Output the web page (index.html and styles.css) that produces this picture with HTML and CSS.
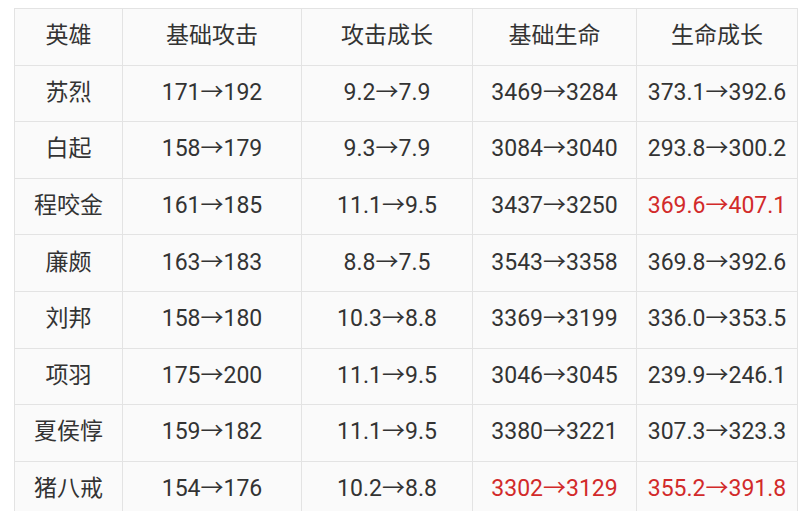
FILE: index.html
```html
<!DOCTYPE html>
<html lang="zh">
<head>
<meta charset="utf-8">
<link rel="stylesheet" href="styles.css">
</head>
<body>
<table class="stats">
  <colgroup>
    <col class="c1"><col class="c2"><col class="c3"><col class="c4"><col class="c5">
  </colgroup>
  <thead>
    <tr><th>英雄</th><th>基础攻击</th><th>攻击成长</th><th>基础生命</th><th>生命成长</th></tr>
  </thead>
  <tbody>
    <tr><td>苏烈</td><td>171→192</td><td>9.2→7.9</td><td>3469→3284</td><td>373.1→392.6</td></tr>
    <tr><td>白起</td><td>158→179</td><td>9.3→7.9</td><td>3084→3040</td><td>293.8→300.2</td></tr>
    <tr><td>程咬金</td><td>161→185</td><td>11.1→9.5</td><td>3437→3250</td><td class="up">369.6→407.1</td></tr>
    <tr><td>廉颇</td><td>163→183</td><td>8.8→7.5</td><td>3543→3358</td><td>369.8→392.6</td></tr>
    <tr><td>刘邦</td><td>158→180</td><td>10.3→8.8</td><td>3369→3199</td><td>336.0→353.5</td></tr>
    <tr><td>项羽</td><td>175→200</td><td>11.1→9.5</td><td>3046→3045</td><td>239.9→246.1</td></tr>
    <tr><td>夏侯惇</td><td>159→182</td><td>11.1→9.5</td><td>3380→3221</td><td>307.3→323.3</td></tr>
    <tr><td>猪八戒</td><td>154→176</td><td>10.2→8.8</td><td class="up">3302→3129</td><td class="up">355.2→391.8</td></tr>
  </tbody>
</table>
</body>
</html>
```
FILE: styles.css
```css
html, body {
  margin: 0;
  padding: 0;
  background: #ffffff;
  overflow: hidden;
}
body {
  padding: 8px 0 0 14px;
  font-family: Roboto, "Noto Sans CJK SC", sans-serif;
  color: #333333;
}
.stats {
  border-collapse: collapse;
  table-layout: fixed;
  width: 783px;
  background: #fafafa;
}
.c1 { width: 108px; }
.c2 { width: 179px; }
.c3 { width: 171px; }
.c4 { width: 164px; }
.c5 { width: 161px; }
.stats th, .stats td {
  border: 1.5px solid #e3e3e3;
  height: 56.6px;
  padding: 0 0 7px 0;
  text-align: center;
  vertical-align: middle;
  font-size: 23px;
  font-weight: 400;
  box-sizing: border-box;
}
.stats td.up {
  color: #d22a2a;
}
```
